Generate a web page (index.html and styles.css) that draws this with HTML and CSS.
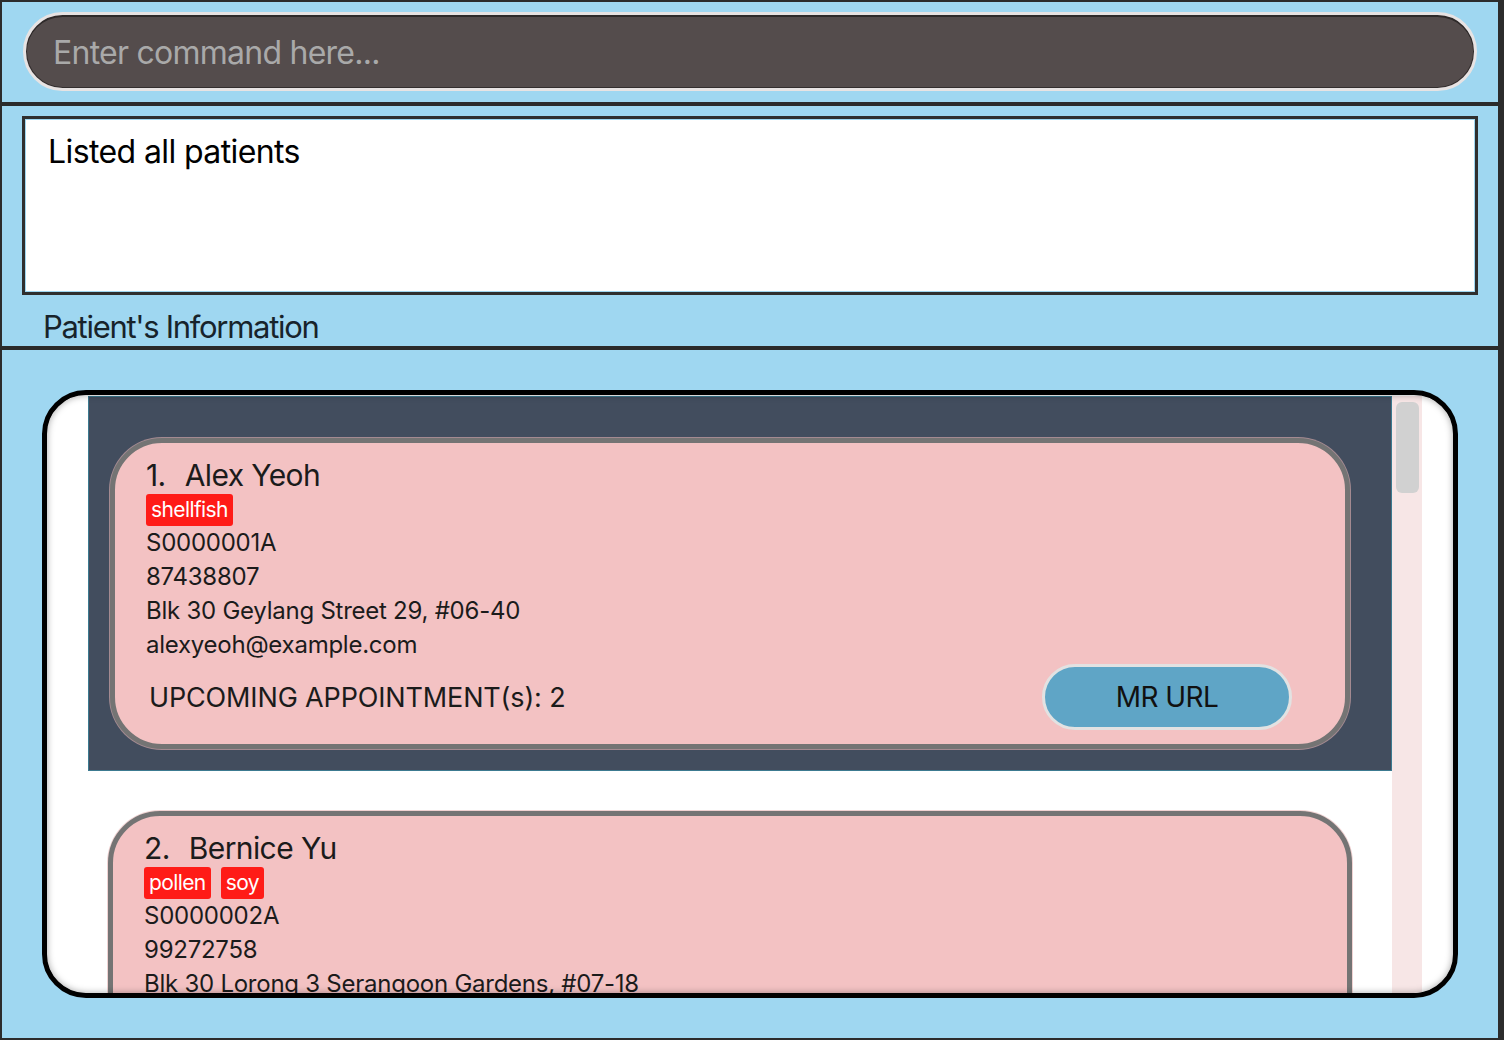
FILE: index.html
```html
<!DOCTYPE html>
<html lang="en">
<head>
<meta charset="utf-8">
<title>Patients</title>
<link rel="stylesheet" href="styles.css">
</head>
<body>
<div class="app">
  <div class="command-section">
    <div class="command-box">
      <input class="command-input" type="text" placeholder="Enter command here...">
    </div>
  </div>
  <div class="result-section">
    <div class="result-box">Listed all patients</div>
    <div class="panel-title">Patient's Information</div>
  </div>
  <div class="list-section">
    <div class="list-panel">
      <div class="list-view">
        <div class="cells">
          <div class="cell selected">
            <div class="card">
              <div class="card-name"><span class="idx">1.</span><span>Alex Yeoh</span></div>
              <div class="tags"><span class="tag">shellfish</span></div>
              <div class="field">S0000001A</div>
              <div class="field">87438807</div>
              <div class="field">Blk 30 Geylang Street 29, #06-40</div>
              <div class="field">alexyeoh@example.com</div>
              <div class="bottom-row">
                <span class="appt">UPCOMING APPOINTMENT(s): 2</span>
                <button class="mr-btn">MR URL</button>
              </div>
            </div>
          </div>
          <div class="cell">
            <div class="card">
              <div class="card-name"><span class="idx">2.</span><span>Bernice Yu</span></div>
              <div class="tags"><span class="tag">pollen</span><span class="tag">soy</span></div>
              <div class="field">S0000002A</div>
              <div class="field">99272758</div>
              <div class="field">Blk 30 Lorong 3 Serangoon Gardens, #07-18</div>
              <div class="field">berniceyu@example.com</div>
              <div class="bottom-row">
                <span class="appt">UPCOMING APPOINTMENT(s): 0</span>
                <button class="mr-btn">MR URL</button>
              </div>
            </div>
          </div>
        </div>
        <div class="scrollbar"><div class="thumb"></div></div>
      </div>
    </div>
  </div>
</div>
</body>
</html>
```

FILE: styles.css
```css
* { box-sizing: border-box; }

html, body {
  margin: 0;
  padding: 0;
}

body {
  background: #2c2c2c;
  width: 1504px;
  height: 1040px;
  overflow: hidden;
  font-family: Inter, "Noto Sans", "Liberation Sans", sans-serif;
}

.app {
  margin: 2px 6px 2px 2px;
  width: 1496px;
  height: 1036px;
  background: #9fd7f1;
  display: flex;
  flex-direction: column;
}

/* command */
.command-section {
  flex: none;
  height: 104px;
  padding: 10px 21px 0 21px;
  border-bottom: 4px solid #2b2b2b;
}

.command-box {
  height: 79px;
  border: 3px solid #e7e3e3;
  border-radius: 40px;
  background: #544c4c;
  box-shadow: inset 0 2px 0 #2e2a2a, inset 0 0 0 1px #332e2e;
  padding: 0 0 0 27px;
  display: flex;
  align-items: center;
}

.command-input {
  width: 100%;
  border: none;
  outline: none;
  background: transparent;
  font-family: Inter, "Noto Sans", sans-serif;
  font-size: 32px;
  letter-spacing: -0.75px;
  color: #e0e0e0;
  padding: 0;
  margin-top: 2px;
}

.command-input::placeholder {
  color: #a9a9a9;
}

/* result */
.result-section {
  flex: none;
  height: 244px;
  padding: 10px 20px 0 20px;
  border-bottom: 4px solid #2b2b2b;
}

.result-box {
  height: 179px;
  border: 3px solid #2f2f2f;
  box-shadow: inset 0 0 0 1px #9fd7f1;
  background: #fff;
  padding: 13px 23px 9px;
  font-size: 32px;
  line-height: 40px;
  letter-spacing: -0.6px;
  color: #000;
}

.panel-title {
  margin-top: 14px;
  height: 36px;
  line-height: 36px;
  padding-left: 21px;
  font-size: 31px;
  letter-spacing: -1.3px;
  color: #17232b;
}

/* list */
.list-section {
  flex: 1;
  padding: 40px 40px 0 40px;
}

.list-panel {
  position: relative;
  height: 608px;
  border: 5px solid #000;
  border-radius: 44px;
  background: #fff;
  overflow: hidden;
  padding: 1px 31px 0 41px;
}

.list-panel::after {
  content: "";
  position: absolute;
  inset: 0;
  border-radius: 39px;
  box-shadow: inset 0 0 7px rgba(0, 0, 0, 0.35);
  pointer-events: none;
}

.list-view {
  display: flex;
  height: 100%;
}

.cells {
  flex: 1;
  overflow: hidden;
}

.cell {
  padding: 40px 40px 20px 20px;
}

.cell.selected {
  background: #424d5e;
  border: 1px solid #3c7a90;
  padding: 41px 41px 21px 21px;
}

.scrollbar {
  width: 30px;
  flex: none;
  background: #f7e6e6;
  padding: 6px 3px 0 4px;
}

.thumb {
  height: 91px;
  border-radius: 6px;
  background: #d1d1d1;
}

/* card */
.card {
  border: 5px solid #747474;
  border-radius: 52px;
  background: #f3c2c3;
  padding: 13px 53px 14px 31px;
  color: #1b1b1b;
  box-shadow: 0 0 0 1px rgba(230, 180, 180, 0.6);
}

.card-name {
  display: flex;
  gap: 19px;
  font-size: 30px;
  line-height: 38px;
  letter-spacing: -0.6px;
}

.tags {
  display: flex;
  gap: 10px;
  height: 32px;
}

.tag {
  background: #ff1b17;
  color: #fff;
  font-size: 21px;
  line-height: 32px;
  padding: 0 5px;
  border-radius: 3px;
  letter-spacing: -0.6px;
}

.field {
  font-size: 24px;
  line-height: 34px;
  letter-spacing: -0.25px;
}

.field.num {
  font-variant-numeric: tabular-nums;
}

.bottom-row {
  display: flex;
  justify-content: space-between;
  align-items: center;
  margin-top: 2px;
  height: 66px;
}

.appt {
  padding-left: 3px;
  font-size: 27px;
  letter-spacing: -0.15px;
}

.mr-btn {
  width: 250px;
  height: 66px;
  border: 3px solid #e2e2e2;
  border-radius: 33px;
  background: #5fa5c6;
  font-family: Inter, "Noto Sans", sans-serif;
  font-size: 28px;
  letter-spacing: -0.6px;
  color: #111;
  padding: 0;
}
```
